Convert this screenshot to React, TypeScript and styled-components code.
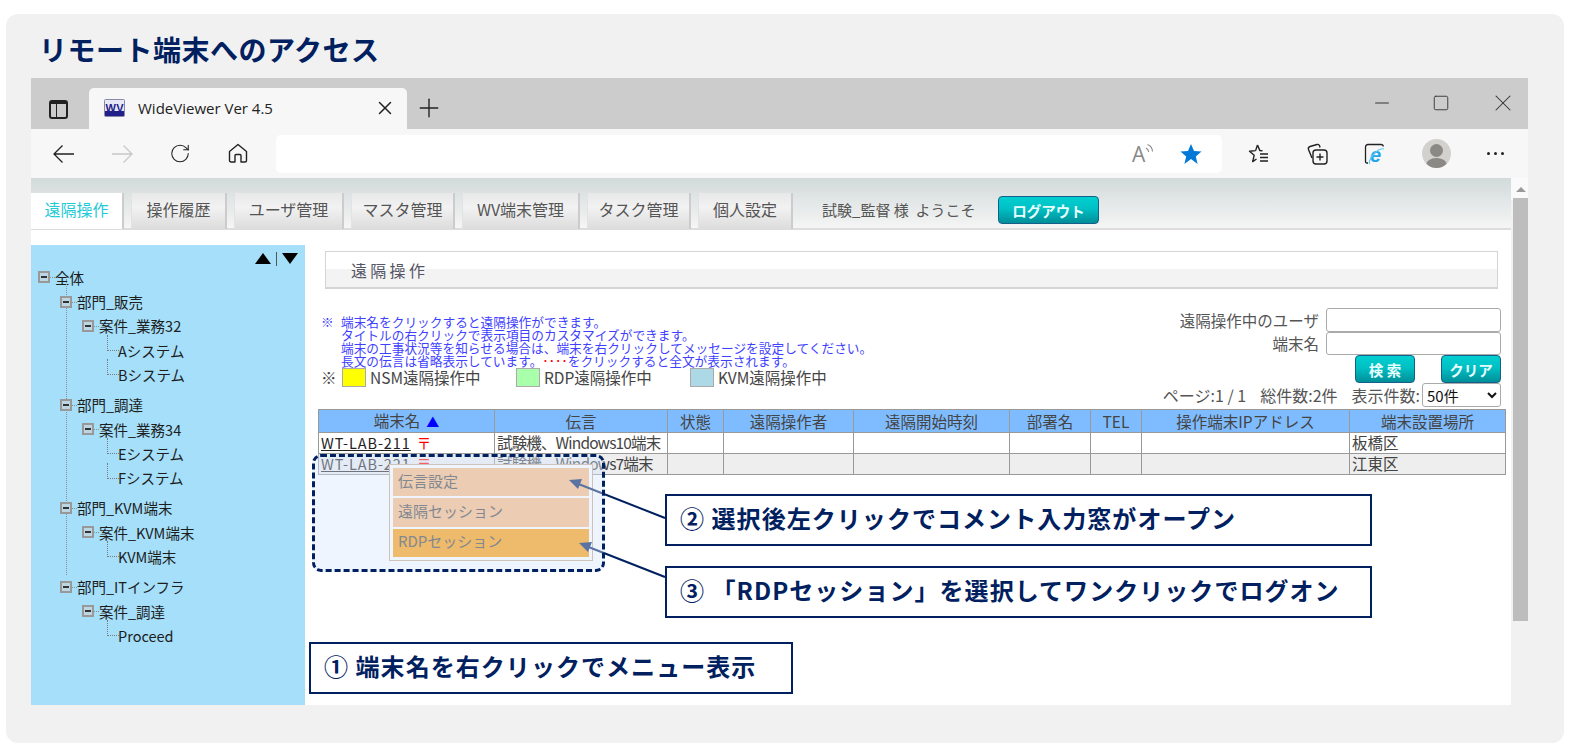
import React from "react";
import styled, { createGlobalStyle } from "styled-components";
import { Minus, Plus, RotateCw, Square, X } from "lucide-react";

const NAVY = "#002060";
const JP = `"Noto Sans CJK JP", "Noto Sans", sans-serif`;

const GlobalStyle = createGlobalStyle`
  html, body {
    margin: 0;
    padding: 0;
    background: #ffffff;
    font-family: ${JP};
  }
  * { box-sizing: border-box; }
`;

const Panel = styled.div`
  width: 1558px;
  height: 729px;
  margin: 14px 0 0 6px;
  padding-left: 25px;
  background: #f1f1f1;
  border-radius: 12px;
`;

const Title = styled.h1`
  height: 64px;
  margin: 0;
  padding-left: 8px;
  font-size: 28px;
  line-height: 70px;
  font-weight: 700;
  letter-spacing: 0.5px;
  color: ${NAVY};
`;

const Browser = styled.div`
  position: relative;
  width: 1497px;
  height: 627px;
  display: flex;
  flex-direction: column;
`;

const TabStrip = styled.div`
  height: 51px;
  flex: none;
  display: flex;
  align-items: flex-end;
  padding-left: 18px;
  background: #cccccc;
`;

const WindowIcon = styled.div`
  width: 19px;
  height: 19px;
  margin: 0 21px 10px 0;
  display: flex;
  border: 2px solid #222;
  border-top-width: 4px;
  border-radius: 3px;
  &::before {
    content: "";
    width: 5px;
    border-right: 1.5px solid #222;
  }
`;

const BrowserTab = styled.div`
  width: 318px;
  height: 41px;
  display: flex;
  align-items: center;
  padding: 0 11px 2px 15px;
  background: #f7f7f7;
  border-radius: 5px 5px 0 0;
  font-family: "Open Sans", "Noto Sans", sans-serif;
  font-size: 15px;
  color: #222;
`;

const TabLabel = styled.span`
  flex: 1;
  margin-left: 13px;
`;

const NewTab = styled.div`
  display: flex;
  margin: 0 0 6px 7px;
  color: #222;
`;

const WindowControls = styled.div`
  margin-left: auto;
  align-self: flex-start;
  display: flex;
  align-items: center;
  gap: 39px;
  padding: 11px 11px 0 0;
  color: #333;
`;

const Toolbar = styled.div`
  height: 49px;
  flex: none;
  display: flex;
  align-items: center;
  padding-left: 22px;
  background: #f7f7f7;
`;

const NavIcons = styled.div`
  display: flex;
  align-items: center;
  gap: 36px;
  color: #222;
`;

const NavSlot = styled.div`
  width: 22px;
  height: 28px;
  display: flex;
  align-items: center;
  justify-content: center;
`;

const AddressBar = styled.div`
  width: 946px;
  height: 38px;
  margin: 0 26px 0 27px;
  padding-right: 20px;
  display: flex;
  align-items: center;
  justify-content: flex-end;
  gap: 26px;
  background: #ffffff;
  border-radius: 5px;
`;

const ActionIcons = styled.div`
  display: flex;
  align-items: center;
  gap: 36px;
`;

const Avatar = styled.div`
  position: relative;
  width: 29px;
  height: 29px;
  border-radius: 50%;
  background: #d3d1cd;
  overflow: hidden;
  &::before {
    content: "";
    position: absolute;
    left: 8px;
    top: 5px;
    width: 13px;
    height: 13px;
    border-radius: 50%;
    background: #8b8985;
  }
  &::after {
    content: "";
    position: absolute;
    left: 4px;
    top: 19px;
    width: 21px;
    height: 14px;
    border-radius: 50%;
    background: #8b8985;
  }
`;

const Dots = styled.div`
  display: flex;
  gap: 4px;
  span {
    width: 3px;
    height: 3px;
    border-radius: 50%;
    background: #222;
  }
`;

const PageArea = styled.div`
  flex: 1;
  display: flex;
  min-height: 0;
`;

const Page = styled.div`
  width: 1480px;
  background: #ffffff;
  display: flex;
  flex-direction: column;
`;

const Scrollbar = styled.div`
  flex: 1;
  padding: 4px 0 0 2px;
  display: flex;
  flex-direction: column;
  background: linear-gradient(#fafafa 0, #fafafa 22px, #f1f1f1 22px);
`;

const ScrollUp = styled.div`
  width: 0;
  height: 0;
  margin: 5px 0 6px 3px;
  border-left: 5px solid transparent;
  border-right: 5px solid transparent;
  border-bottom: 5px solid #9a9a9a;
`;

const ScrollThumb = styled.div`
  width: 15px;
  height: 423px;
  background: #bdbdbd;
`;

const MenuBar = styled.div`
  height: 52px;
  flex: none;
  display: flex;
  align-items: flex-end;
  gap: 7px;
  background: linear-gradient(#d2dada, #f5f5f5);
  border-bottom: 2px solid #dddddd;
`;

const MenuTab = styled.div<{ $w: number; $active?: boolean }>`
  width: ${(p) => p.$w}px;
  height: 36px;
  margin-bottom: -1px;
  padding-bottom: 4px;
  display: flex;
  align-items: center;
  justify-content: center;
  font-size: 16px;
  color: ${(p) => (p.$active ? "#1fcad6" : "#555555")};
  background: ${(p) => (p.$active ? "#ffffff" : "linear-gradient(#e8e8e8, #f2f2f2 40%, #dcdcdc)")};
  border-right: 2px solid #cccccc;
  border-left: ${(p) => (p.$active ? "none" : "1px solid #e2e2e2")};
`;

const Welcome = styled.div`
  width: 170px;
  margin-left: 22px;
  align-self: center;
  padding-top: 13px;
  font-size: 15px;
  color: #555555;
  white-space: pre;
`;

const TealButton = styled.div<{ $w: number }>`
  width: ${(p) => p.$w}px;
  height: 28px;
  display: flex;
  align-items: center;
  justify-content: center;
  border: 1px solid #14608a;
  border-radius: 4px;
  background: linear-gradient(#00cfd0, #00c0c4 45%, #008e98);
  color: #e8ffff;
  font-size: 14.5px;
  font-weight: 700;
`;

const LogoutButton = styled(TealButton)`
  margin: 0 0 4px -1px;
`;

const Body = styled.div`
  flex: 1;
  display: flex;
  min-height: 0;
`;

const Sidebar = styled.aside`
  width: 274px;
  margin-top: 15px;
  background: #a5dff9;
  color: #1d1d1d;
  font-size: 14.5px;
`;

const SortArrows = styled.div`
  height: 20px;
  padding: 7px 7px 0 0;
  display: flex;
  justify-content: flex-end;
  align-items: center;
  gap: 5px;
  i {
    width: 1px;
    height: 14px;
    background: #555;
  }
`;

const Arrow = styled.div<{ $down?: boolean }>`
  width: 0;
  height: 0;
  border-left: 8px solid transparent;
  border-right: 8px solid transparent;
  ${(p) => (p.$down ? "border-top: 11px solid #000;" : "border-bottom: 11px solid #000;")}
`;

const DeptList = styled.div`
  position: relative;
  display: flex;
  flex-direction: column;
  gap: 6px;
  &::before {
    content: "";
    position: absolute;
    left: 35px;
    top: -10px;
    height: 296px;
    border-left: 1px dotted #8e8e8e;
  }
`;

const TreeRow = styled.div<{ $level: number }>`
  position: relative;
  height: 24.4px;
  display: flex;
  align-items: center;
  padding-left: ${(p) => 7 + p.$level * 22}px;
  white-space: pre;
`;

const Toggle = styled.span`
  position: relative;
  width: 12px;
  height: 12px;
  margin-right: 5px;
  flex: none;
  border: 2px solid #999;
  background: #bcd6e4;
  &::before {
    content: "";
    position: absolute;
    left: 1px;
    right: 1px;
    top: 3px;
    height: 2px;
    background: #333;
  }
  &::after {
    content: "";
    position: absolute;
    left: 10px;
    top: 4px;
    width: 5px;
    border-top: 1px dotted #8e8e8e;
  }
`;

const LeafRow = styled.div`
  position: relative;
  height: 24.2px;
  display: flex;
  align-items: center;
  padding-left: 87px;
  &::before {
    content: "";
    position: absolute;
    left: 76px;
    top: -3px;
    width: 11px;
    height: 15px;
    border-left: 1px dotted #7c7c7c;
    border-bottom: 1px dotted #7c7c7c;
  }
`;

const Main = styled.main`
  flex: 1;
  display: flex;
  flex-direction: column;
`;

const Heading = styled.div`
  width: 1173px;
  height: 38px;
  margin: 21px 0 19px 20px;
  padding: 1px 0 0 25px;
  flex: none;
  display: flex;
  align-items: center;
  font-size: 16px;
  letter-spacing: 3.3px;
  color: #555566;
  border: 1px solid #d4d4d4;
  border-bottom-width: 2px;
  background: linear-gradient(#ffffff 0, #ffffff 17px, #f3f3f3 17px);
`;

const TopRow = styled.div`
  height: 101px;
  padding: 0 10px 0 13px;
  flex: none;
  display: flex;
  justify-content: space-between;
`;

const Notes = styled.div`
  padding-top: 7px;
`;

const NoteBlock = styled.div`
  display: flex;
  height: 53px;
  font-size: 12.7px;
  line-height: 13px;
  color: #3f3fff;
`;

const NoteMark = styled.span`
  width: 23px;
  padding-left: 3px;
`;

const RedDots = styled.span`
  color: #ff0000;
  font-weight: 700;
`;

const Legend = styled.div`
  display: flex;
  align-items: center;
  height: 18px;
  font-size: 15.5px;
  color: #444444;
`;

const LegendMark = styled.span`
  width: 24px;
  padding-left: 3px;
`;

const LegendItem = styled.div`
  width: 174px;
  display: flex;
  align-items: center;
  gap: 4px;
  white-space: nowrap;
`;

const Swatch = styled.span<{ $color: string }>`
  width: 24px;
  height: 19px;
  flex: none;
  background: ${(p) => p.$color};
  border: 1px solid #aaaaaa;
`;

const SearchBox = styled.div`
  display: flex;
  flex-direction: column;
  align-items: flex-end;
  font-size: 15.5px;
  color: #555555;
`;

const Field = styled.label`
  display: flex;
  align-items: center;
  gap: 7px;
`;

const FieldInput = styled.input`
  width: 175px;
  height: 23.5px;
  padding: 0 4px;
  border: 1px solid #aaaaaa;
  border-radius: 3px;
  background: #ffffff;
`;

const SearchButtons = styled.div`
  display: flex;
  gap: 26px;
  color: #fff;
`;

const PagerRow = styled.div`
  height: 23px;
  display: flex;
  align-items: center;
  gap: 14px;
  font-size: 16px;
  white-space: pre;
`;

const PagerSize = styled.label`
  display: flex;
  align-items: center;
  gap: 2px;
`;

const PageSelect = styled.select`
  width: 79px;
  height: 24px;
  font-family: ${JP};
  font-size: 15px;
  color: #111;
  border: 1px solid #aaaaaa;
  border-radius: 3px;
  background: #ffffff;
`;

const Grid = styled.table`
  width: 1187px;
  margin-left: 13px;
  table-layout: fixed;
  border-collapse: collapse;
  font-size: 15.5px;
  color: #444444;
`;

const Col = styled.col<{ $w: number }>`
  width: ${(p) => p.$w}px;
`;

const Th = styled.th`
  height: 22px;
  padding: 0;
  font-weight: 400;
  text-align: center;
  line-height: 20px;
  background: #7fbcff;
  border: 1px solid #999999;
`;

const Tr = styled.tr<{ $alt?: boolean }>`
  background: ${(p) => (p.$alt ? "#eeeeee" : "#ffffff")};
`;

const Td = styled.td`
  height: 21px;
  padding: 0 2px 2px;
  line-height: 17px;
  white-space: nowrap;
  border: 1px solid #999999;
`;

const MemoCell = styled(Td)`
  letter-spacing: -0.85px;
`;

const TermLink = styled.a`
  font-size: 14.5px;
  color: #222222;
  text-decoration: underline;
  letter-spacing: 0.9px;
`;

const Postal = styled.span`
  margin-left: 6px;
  font-size: 14.5px;
  color: #ff0000;
`;

const SortUp = styled.span`
  margin-left: 6px;
  font-size: 13px;
  color: #0000ff;
`;

const ContextMenu = styled.div`
  position: absolute;
  left: 358px;
  top: 386px;
  width: 204px;
  height: 97px;
  padding: 3px;
  display: flex;
  flex-direction: column;
  gap: 2px;
  background: #ffffff;
  border: 1px solid #c9a98c;
  font-size: 15px;
  color: #444444;
`;

const MenuItem = styled.div<{ $on?: boolean }>`
  height: 29px;
  padding: 0 0 4px 5px;
  display: flex;
  align-items: center;
  background: ${(p) => (p.$on ? "#ff9900" : "#fbb97a")};
`;

const Arrows = styled.svg`
  position: absolute;
  left: 0;
  top: 0;
  width: 1497px;
  height: 627px;
  pointer-events: none;
`;

const Highlight = styled.div`
  position: absolute;
  left: 281px;
  top: 376px;
  width: 293px;
  height: 118px;
  border: 3px dashed ${NAVY};
  border-radius: 9px;
  background: rgba(214, 230, 255, 0.42);
`;

const Callout = styled.div<{ $left: number; $top: number; $w: number }>`
  position: absolute;
  left: ${(p) => p.$left}px;
  top: ${(p) => p.$top}px;
  width: ${(p) => p.$w}px;
  height: 52px;
  padding: 0 0 5px 13px;
  display: flex;
  align-items: center;
  background: #ffffff;
  border: 2px solid ${NAVY};
  color: ${NAVY};
  font-size: 24px;
  font-weight: 700;
  letter-spacing: 1.05px;
  white-space: pre;
`;

const columns = [176, 173, 56, 130, 156, 81, 51, 208, 156];
const headers = ["伝言", "状態", "遠隔操作者", "遠隔開始時刻", "部署名", "TEL", "操作端末IPアドレス", "端末設置場所"];

const rows = [
  { name: "WT-LAB-211", memo: "試験機、Windows10端末", place: "板橋区" },
  { name: "WT-LAB-221", memo: "試験機、Windows7端末", place: "江東区" },
];

const tree = [
  { dept: "部門_販売", group: "案件_業務32", leaves: ["Aシステム", "Bシステム"] },
  { dept: "部門_調達", group: "案件_業務34", leaves: ["Eシステム", "Fシステム"] },
  { dept: "部門_KVM端末", group: "案件_KVM端末", leaves: ["KVM端末"] },
  { dept: "部門_ITインフラ", group: "案件_調達", leaves: ["Proceed"] },
];

const FaviconIcon = () => (
  <svg width="21" height="18" viewBox="0 0 21 18">
    <rect x="0.5" y="0.5" width="20" height="17" rx="1" fill="#e8e8f4" stroke="#8888aa" />
    <rect x="1" y="12" width="19" height="5" fill="#20208a" />
    <text x="1.5" y="12.5" fontFamily="Liberation Sans" fontSize="11" fontWeight="700" fill="#20208a" textLength="18">
      WV
    </text>
  </svg>
);

const BackIcon = ({ color }: { color: string }) => (
  <svg width="22" height="20" viewBox="0 0 22 20" fill="none" stroke={color} strokeWidth="1.3">
    <path d="M1 10H21M9.500 1.500L1 10l8.500 8.500" />
  </svg>
);

const ForwardIcon = ({ color }: { color: string }) => (
  <svg width="22" height="20" viewBox="0 0 22 20" fill="none" stroke={color} strokeWidth="1.3">
    <path d="M1 10H21M12.500 1.500L21 10l-8.500 8.500" />
  </svg>
);

const HomeIcon = () => (
  <svg width="20" height="21" viewBox="0 0 20 21" fill="none" stroke="#222" strokeWidth="1.4" strokeLinejoin="round">
    <path d="M10 1.500L18.500 8.500V17.500a1.500 1.500 0 0 1-1.500 1.500H13V12.500a1 1 0 0 0-1-1H8a1 1 0 0 0-1 1V19H3a1.500 1.500 0 0 1-1.500-1.500V8.500z" />
  </svg>
);

const ReadAloudIcon = () => (
  <svg width="22" height="26" viewBox="0 0 22 26" fill="none" stroke="#888" strokeWidth="1.1">
    <text x="0" y="21" fontFamily="Open Sans" fontSize="21" fill="#888" stroke="none">
      A
    </text>
    <path d="M14 7c1.600.8 2.500 2.200 2.700 4M15.500 3.500c3 1.200 4.800 3.600 5 7" />
  </svg>
);

const StarIcon = () => (
  <svg width="22" height="22" viewBox="0 0 22 22">
    <path d="M11 1l3 7 7.500.6-5.700 4.900 1.800 7.400L11 16l-6.600 4.900 1.800-7.400L.5 8.600 8 8z" fill="#0078d7" />
  </svg>
);

const FavoritesIcon = () => (
  <svg width="22" height="22" viewBox="0 0 22 22" fill="none" stroke="#222" strokeWidth="1.4" strokeLinejoin="round">
    <path d="M9.500 2l2.400 5.600 2.600.2M7.600 7.600l-6.100.6 4.700 4-1.500 6.400 3.800-2.600M7.600 7.600L9.500 2" />
    <path d="M12 11h8M12 14.500h8M12 18h8" />
  </svg>
);

const CollectionsIcon = () => (
  <svg width="22" height="22" viewBox="0 0 22 22" fill="none" stroke="#222" strokeWidth="1.4">
    <path d="M6 15L2.500 6.500C2 5 2.600 4 4 3.500l7-2c1.300-.3 2.200.2 2.700 1.500L14 4.500" />
    <rect x="7" y="7" width="14" height="14" rx="3" />
    <path d="M14 10.500v7M10.500 14h7" />
  </svg>
);

const IeIcon = () => (
  <svg width="22" height="22" viewBox="0 0 22 22" fill="none">
    <path d="M4 20H3c-1 0-1.500-.6-1.500-1.500V4C1.500 2.500 2.500 1.500 4 1.500h13c1.300 0 2.200.8 2.300 2" stroke="#222" strokeWidth="1.3" />
    <text x="6" y="19" fontFamily="Liberation Sans" fontSize="20" fontWeight="700" fontStyle="italic" fill="#1ea7ea">
      e
    </text>
    <path d="M6 21c-1.500-1-.5-5 3-9s8-7 11-6" stroke="#5cc8f5" strokeWidth="1.2" />
  </svg>
);

export default function App() {
  return (
    <>
      <GlobalStyle />
      <Panel>
        <Title>リモート端末へのアクセス</Title>
        <Browser>
          <TabStrip>
            <WindowIcon />
            <BrowserTab>
              <FaviconIcon />
              <TabLabel>WideViewer Ver 4.5</TabLabel>
              <X size={22} strokeWidth={1.6} />
            </BrowserTab>
            <NewTab>
              <Plus size={30} strokeWidth={1.1} />
            </NewTab>
            <WindowControls>
              <Minus size={22} strokeWidth={1.1} />
              <Square size={18} strokeWidth={1.2} />
              <X size={28} strokeWidth={0.9} />
            </WindowControls>
          </TabStrip>
          <Toolbar>
            <NavIcons>
              <NavSlot>
                <BackIcon color="#222" />
              </NavSlot>
              <NavSlot>
                <ForwardIcon color="#c8c8c8" />
              </NavSlot>
              <NavSlot>
                <RotateCw size={27} strokeWidth={1.15} />
              </NavSlot>
              <NavSlot>
                <HomeIcon />
              </NavSlot>
            </NavIcons>
            <AddressBar>
              <ReadAloudIcon />
              <StarIcon />
            </AddressBar>
            <ActionIcons>
              <FavoritesIcon />
              <CollectionsIcon />
              <IeIcon />
              <Avatar />
              <Dots>
                <span />
                <span />
                <span />
              </Dots>
            </ActionIcons>
          </Toolbar>
          <PageArea>
            <Page>
              <MenuBar>
                <MenuTab $w={93} $active>
                  遠隔操作
                </MenuTab>
                <MenuTab $w={96}>操作履歴</MenuTab>
                <MenuTab $w={110}>ユーザ管理</MenuTab>
                <MenuTab $w={104}>マスタ管理</MenuTab>
                <MenuTab $w={118}>WV端末管理</MenuTab>
                <MenuTab $w={104}>タスク管理</MenuTab>
                <MenuTab $w={95}>個人設定</MenuTab>
                <Welcome>試験_監督 様  ようこそ</Welcome>
                <LogoutButton $w={101}>ログアウト</LogoutButton>
              </MenuBar>
              <Body>
                <Sidebar>
                  <SortArrows>
                    <Arrow />
                    <i />
                    <Arrow $down />
                  </SortArrows>
                  <TreeRow $level={0}>
                    <Toggle />
                    全体
                  </TreeRow>
                  <DeptList>
                    {tree.map((d) => (
                      <div key={d.dept}>
                        <TreeRow $level={1}>
                          <Toggle />
                          {d.dept}
                        </TreeRow>
                        <TreeRow $level={2}>
                          <Toggle />
                          {d.group}
                        </TreeRow>
                        {d.leaves.map((leaf) => (
                          <LeafRow key={leaf}>{leaf}</LeafRow>
                        ))}
                      </div>
                    ))}
                  </DeptList>
                </Sidebar>
                <Main>
                  <Heading>遠隔操作</Heading>
                  <TopRow>
                    <Notes>
                      <NoteBlock>
                        <NoteMark>※</NoteMark>
                        <div>
                          端末名をクリックすると遠隔操作ができます。
                          <br />
                          タイトルの右クリックで表示項目のカスタマイズができます。
                          <br />
                          端末の工事状況等を知らせる場合は、端末を右クリックしてメッセージを設定してください。
                          <br />
                          長文の伝言は省略表示しています。<RedDots>‥‥</RedDots>をクリックすると全文が表示されます。
                        </div>
                      </NoteBlock>
                      <Legend>
                        <LegendMark>※</LegendMark>
                        <LegendItem>
                          <Swatch $color="#ffff00" />
                          NSM遠隔操作中
                        </LegendItem>
                        <LegendItem>
                          <Swatch $color="#aaffaa" />
                          RDP遠隔操作中
                        </LegendItem>
                        <LegendItem>
                          <Swatch $color="#add8e6" />
                          KVM遠隔操作中
                        </LegendItem>
                      </Legend>
                    </Notes>
                    <SearchBox>
                      <Field>
                        遠隔操作中のユーザ
                        <FieldInput />
                      </Field>
                      <Field>
                        端末名
                        <FieldInput />
                      </Field>
                      <SearchButtons>
                        <TealButton $w={60}>検 索</TealButton>
                        <TealButton $w={60}>クリア</TealButton>
                      </SearchButtons>
                      <PagerRow>
                        <span>ページ:1 / 1</span>
                        <span>総件数:2件</span>
                        <PagerSize>
                          表示件数:
                          <PageSelect defaultValue="50">
                            <option value="50">50件</option>
                          </PageSelect>
                        </PagerSize>
                      </PagerRow>
                    </SearchBox>
                  </TopRow>
                  <Grid>
                    <colgroup>
                      {columns.map((w, i) => (
                        <Col key={i} $w={w} />
                      ))}
                    </colgroup>
                    <thead>
                      <tr>
                        <Th>
                          端末名<SortUp>▲</SortUp>
                        </Th>
                        {headers.map((h) => (
                          <Th key={h}>{h}</Th>
                        ))}
                      </tr>
                    </thead>
                    <tbody>
                      {rows.map((r, i) => (
                        <Tr key={r.name} $alt={i === 1}>
                          <Td>
                            <TermLink>{r.name}</TermLink>
                            <Postal>〒</Postal>
                          </Td>
                          <MemoCell>{r.memo}</MemoCell>
                          <Td />
                          <Td />
                          <Td />
                          <Td />
                          <Td />
                          <Td />
                          <Td>{r.place}</Td>
                        </Tr>
                      ))}
                    </tbody>
                  </Grid>
                </Main>
              </Body>
            </Page>
            <Scrollbar>
              <ScrollUp />
              <ScrollThumb />
            </Scrollbar>
          </PageArea>
          <ContextMenu>
            <MenuItem>伝言設定</MenuItem>
            <MenuItem>遠隔セッション</MenuItem>
            <MenuItem $on>RDPセッション</MenuItem>
          </ContextMenu>
          <Arrows viewBox="0 0 1497 627">
            <line x1="634" y1="440" x2="545" y2="405" stroke={NAVY} strokeWidth="2" />
            <path d="M538 402l13-1-4 10z" fill={NAVY} />
            <line x1="634" y1="499" x2="555" y2="468" stroke={NAVY} strokeWidth="2" />
            <path d="M548 465l13-1-4 10z" fill={NAVY} />
          </Arrows>
          <Highlight />
          <Callout $left={634} $top={416} $w={707}>
            ② 選択後左クリックでコメント入力窓がオープン
          </Callout>
          <Callout $left={634} $top={488} $w={707}>
            ③ 「RDPセッション」を選択してワンクリックでログオン
          </Callout>
          <Callout $left={278} $top={564} $w={484}>
            ① 端末名を右クリックでメニュー表示
          </Callout>
        </Browser>
      </Panel>
    </>
  );
}
